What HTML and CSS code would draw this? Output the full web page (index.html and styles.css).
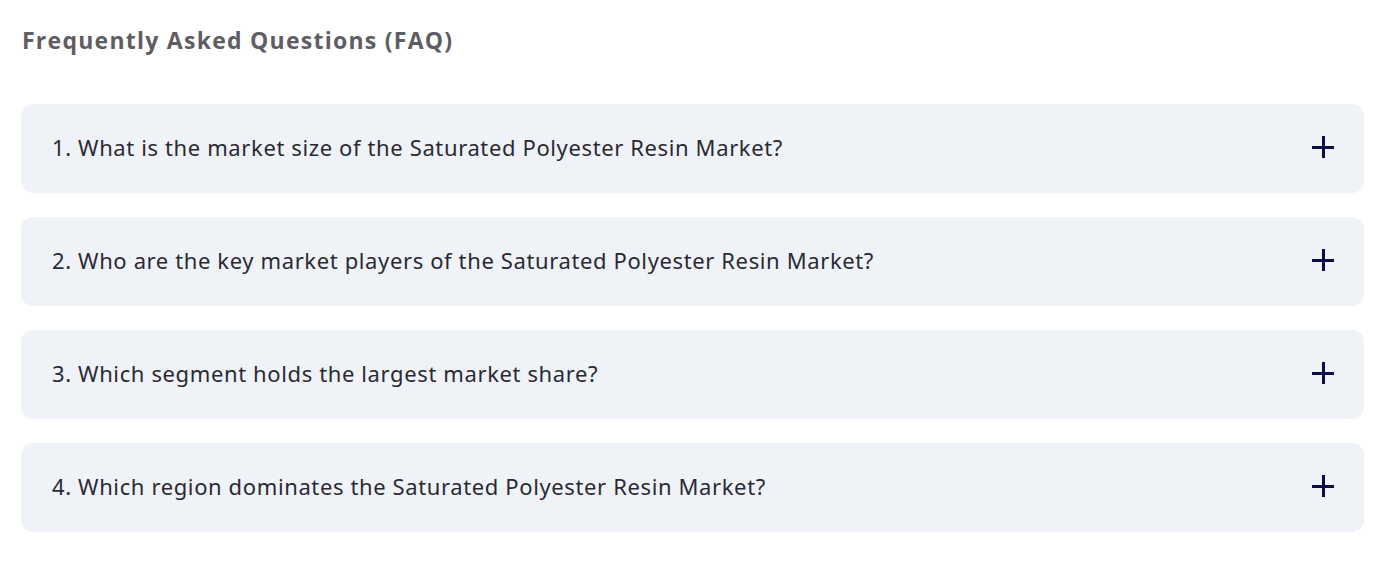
FILE: index.html
```html
<!DOCTYPE html>
<html>
<head>
<meta charset="utf-8">
<link rel="stylesheet" href="styles.css">
</head>
<body>
<section class="faq">
  <h2 class="faq-title">Frequently Asked Questions (FAQ)</h2>
  <div class="faq-list">
    <div class="faq-item"><span class="faq-q">1. What is the market size of the Saturated Polyester Resin Market?</span><span class="plus"></span></div>
    <div class="faq-item"><span class="faq-q">2. Who are the key market players of the Saturated Polyester Resin Market?</span><span class="plus"></span></div>
    <div class="faq-item"><span class="faq-q">3. Which segment holds the largest market share?</span><span class="plus"></span></div>
    <div class="faq-item"><span class="faq-q">4. Which region dominates the Saturated Polyester Resin Market?</span><span class="plus"></span></div>
  </div>
</section>
</body>
</html>
```
FILE: styles.css
```css
html, body { margin: 0; background: #fff; }
.faq { padding: 25px 26px 0 21px; }
.faq-title {
  margin: 0 0 49px 1px;
  font-family: "Open Sans", sans-serif;
  font-weight: 700;
  font-size: 23px;
  letter-spacing: 1.25px;
  line-height: 30px;
  color: #5e5d63;
}
.faq-list { display: flex; flex-direction: column; gap: 24px; }
.faq-item {
  height: 89px;
  box-sizing: border-box;
  background: #eff2f7;
  border-radius: 12px;
  display: flex;
  align-items: center;
  justify-content: space-between;
  padding: 0 30px 3px 31px;
}
.faq-q {
  font-family: "Noto Sans", sans-serif;
  font-size: 22px;
  letter-spacing: 0.62px;
  color: #2a2a33;
}
.plus { position: relative; width: 22px; height: 22px; }
.plus::before, .plus::after {
  content: ""; position: absolute; background: #0d0c4a;
}
.plus::before { left: 0; right: 0; top: 10px; height: 3px; }
.plus::after { top: 0; bottom: 0; left: 10px; width: 3px; }
```
